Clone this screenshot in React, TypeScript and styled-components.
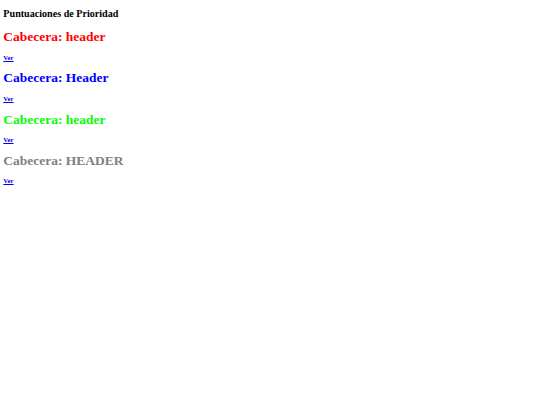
import React from "react";
import styled, { createGlobalStyle } from "styled-components";

// the reference is a plain document rendered at ~42% scale
const S = 0.421;
const px = (n: number) => `${(n * S).toFixed(2)}px`;

const GlobalStyle = createGlobalStyle`
  html, body {
    margin: 0;
    padding: 0;
    background: #ffffff;
  }
  body {
    font-family: "Liberation Serif", "Times New Roman", serif;
  }
`;

const headers = [
  { text: "Cabecera: header", color: "red" },
  { text: "Cabecera: Header", color: "blue" },
  { text: "Cabecera: header", color: "lime" },
  { text: "Cabecera: HEADER", color: "gray" },
];

const App = () => {
  return (
    <>
      <GlobalStyle />
      <Page>
        <Title>Puntuaciones de Prioridad</Title>
        {headers.map((h, i) => (
          <Entry key={i}>
            <Header $color={h.color}>{h.text}</Header>
            <LinkRow>
              <ViewLink href="#">Ver</ViewLink>
            </LinkRow>
          </Entry>
        ))}
      </Page>
    </>
  );
};

export default App;

const Page = styled.main`
  display: flow-root;
  padding: 0 ${px(8)};
`;

const Title = styled.h2`
  margin: ${px(19.92)} 0 ${px(19.92)};
  font-size: ${px(24)};
  font-weight: 700;
  line-height: ${px(27.6)};
`;

const Entry = styled.section``;

const Header = styled.h1<{ $color: string }>`
  margin: ${px(21.44)} 0;
  font-size: ${px(32)};
  font-weight: 700;
  line-height: ${px(36.8)};
  color: ${(p) => p.$color};
`;

const LinkRow = styled.p`
  margin: ${px(16)} 0;
  font-size: ${px(16)};
  line-height: ${px(18.4)};
`;

const ViewLink = styled.a`
  color: #0000ee;
  font-weight: 700;
  text-decoration: underline;
`;
